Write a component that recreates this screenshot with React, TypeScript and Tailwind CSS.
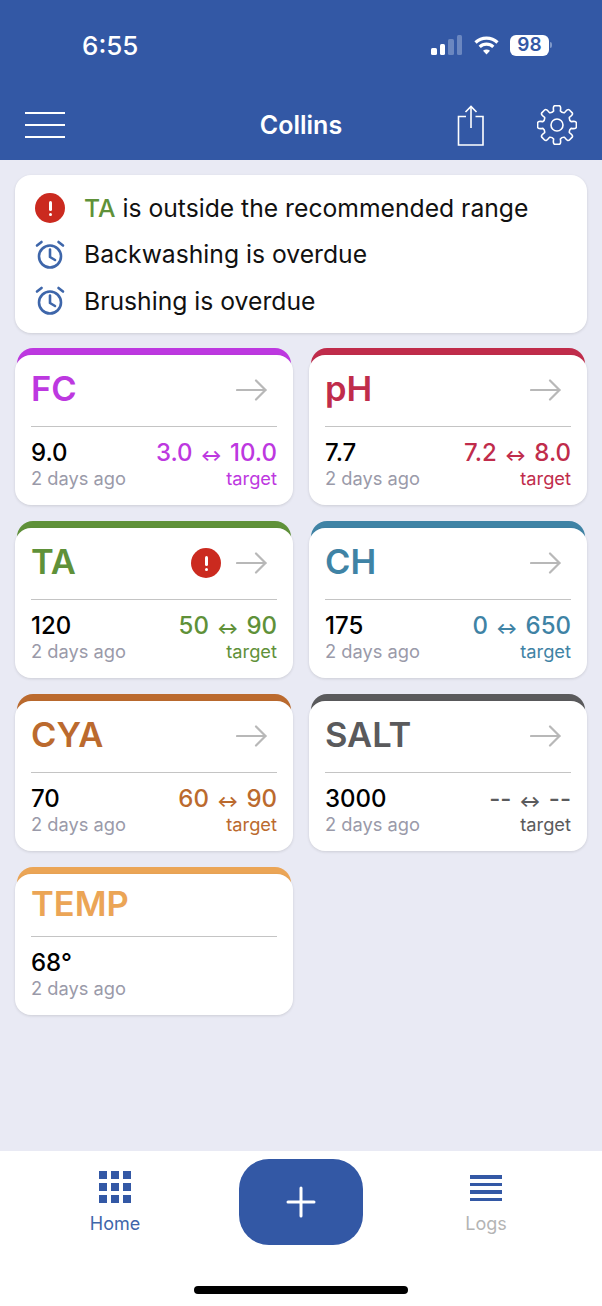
import type { ReactNode } from "react";

type Metric = {
  name: string;
  value: string;
  low?: string;
  high?: string;
  alert?: boolean;
  bar: string;
  text: string;
};

const metrics: Metric[] = [
  { name: "FC", value: "9.0", low: "3.0", high: "10.0", bar: "bg-[#bd38e0]", text: "text-[#bd38e0]" },
  { name: "pH", value: "7.7", low: "7.2", high: "8.0", bar: "bg-[#c02c4b]", text: "text-[#c02c4b]" },
  { name: "TA", value: "120", low: "50", high: "90", alert: true, bar: "bg-[#5f9139]", text: "text-[#5f9139]" },
  { name: "CH", value: "175", low: "0", high: "650", bar: "bg-[#3f83a5]", text: "text-[#3f83a5]" },
  { name: "CYA", value: "70", low: "60", high: "90", bar: "bg-[#bb6a2e]", text: "text-[#bb6a2e]" },
  { name: "SALT", value: "3000", low: "--", high: "--", bar: "bg-[#5a5a5c]", text: "text-[#5a5a5c]" },
  { name: "TEMP", value: "68°", bar: "bg-[#eba556]", text: "text-[#eba556]" },
];

function gearPath() {
  const teeth = 8;
  const cx = 20;
  const cy = 20;
  const outer = 19.5;
  const inner = 14.5;
  const pts: string[] = [];
  for (let i = 0; i < teeth; i++) {
    const a = (i * 2 * Math.PI) / teeth - Math.PI / 2;
    const step = (2 * Math.PI) / teeth;
    const p = (r: number, d: number) =>
      `${(cx + r * Math.cos(a + d * step)).toFixed(2)} ${(cy + r * Math.sin(a + d * step)).toFixed(2)}`;
    pts.push(`${i === 0 ? "M" : "L"}${p(inner, -0.3)}`);
    pts.push(`Q${p(outer, -0.28)} ${p(outer, -0.14)}`);
    pts.push(`L${p(outer, 0.14)}`);
    pts.push(`Q${p(outer, 0.28)} ${p(inner, 0.3)}`);
    pts.push(`Q${p(inner - 1.5, 0.5)} ${p(inner, 0.7)}`);
  }
  return pts.join(" ") + "Z";
}

function GearIcon() {
  return (
    <svg width="40" height="40" viewBox="0 0 40 40" fill="none" stroke="white" strokeWidth="1.6" strokeLinejoin="round">
      <path d={gearPath()} />
      <circle cx="20" cy="20" r="6" />
    </svg>
  );
}

function ShareIcon() {
  return (
    <svg width="28" height="41" viewBox="0 0 28 41" fill="none" stroke="white" strokeWidth="1.6">
      <path d="M9 11.5H1.5V40H26V11.5H18.5" />
      <path d="M14 1.5V23" />
      <path d="M8.5 7L14 1.5L19.5 7" />
    </svg>
  );
}

function AlarmIcon() {
  return (
    <svg width="30" height="30" viewBox="0 0 30 30" fill="none" stroke="#3e66aa" strokeWidth="2.6" strokeLinecap="round" strokeLinejoin="round">
      <circle cx="15" cy="16.5" r="11" />
      <path d="M15 9.5V17L20 20" />
      <path d="M2 5.5L6.5 2" />
      <path d="M28 5.5L23.5 2" />
    </svg>
  );
}

function ErrorDot() {
  return (
    <div className="flex h-[30px] w-[30px] shrink-0 items-center justify-center rounded-full bg-[#cb2a1f]">
      <div className="flex flex-col items-center gap-[2px]">
        <div className="h-[10px] w-[3px] rounded-full bg-white" />
        <div className="h-[3px] w-[3px] rounded-full bg-white" />
      </div>
    </div>
  );
}

function ArrowIcon() {
  return (
    <svg width="31" height="22" viewBox="0 0 31 22" fill="none" stroke="#b8b8b8" strokeWidth="2.2" strokeLinecap="round" strokeLinejoin="round">
      <path d="M1 11H29.5" />
      <path d="M20 1.5L29.5 11L20 20.5" />
    </svg>
  );
}

function StatusIcons() {
  return (
    <div className="flex items-center">
      <div className="flex items-end gap-[3px]">
        <div className="h-[7px] w-[5.5px] rounded-[1.5px] bg-white" />
        <div className="h-[11px] w-[5.5px] rounded-[1.5px] bg-white" />
        <div className="h-[16px] w-[5.5px] rounded-[1.5px] bg-[#6b87c0]" />
        <div className="h-[20px] w-[5.5px] rounded-[1.5px] bg-[#6b87c0]" />
      </div>
      <svg className="ml-[12px]" width="25" height="19" viewBox="0 0 25 19" fill="none" stroke="white" strokeWidth="3.2">
        <path d="M1.5 6.5C7.5 0.7 17.5 0.7 23.5 6.5" />
        <path d="M5.7 10.8C9.5 7.2 15.5 7.2 19.3 10.8" />
        <path d="M12.5 18.5L9 14.8C11 13 14 13 16 14.8Z" fill="white" stroke="none" />
      </svg>
      <div className="ml-[11px] flex h-[21px] w-[39px] items-center justify-center rounded-[6px] bg-white text-[19px] font-semibold text-[#3358a5]">
        98
      </div>
      <div className="ml-[1px] h-[6px] w-[2px] rounded-r-full bg-[#7f98c9]" />
    </div>
  );
}

function Header() {
  return (
    <header className="h-[160px] shrink-0 bg-[#3358a5] text-white">
      <div className="flex h-[90px] items-center justify-between pl-[82px] pr-[50px]">
        <span className="text-[26px] font-medium">6:55</span>
        <StatusIcons />
      </div>
      <div className="grid h-[70px] grid-cols-[1fr_auto_1fr] items-center px-[25px]">
        <div className="flex w-[40px] flex-col gap-[10px]">
          <div className="h-[2px] bg-white" />
          <div className="h-[2px] bg-white" />
          <div className="h-[2px] bg-white" />
        </div>
        <span className="pt-[2px] text-[25px] font-semibold">Collins</span>
        <div className="flex items-center justify-end gap-[52px]">
          <ShareIcon />
          <GearIcon />
        </div>
      </div>
    </header>
  );
}

function AlertRow({ icon, children }: { icon: ReactNode; children: ReactNode }) {
  return (
    <div className="flex h-[46.5px] items-center gap-[19px]">
      {icon}
      <p className="text-[24.7px] text-[#111]">{children}</p>
    </div>
  );
}

function MetricCard({ metric }: { metric: Metric }) {
  const hasTarget = metric.low !== undefined;

  return (
    <div>
      <div className={`mx-[2px] -mb-[20px] h-[27px] rounded-t-[16px] ${metric.bar}`} />
      <div className="relative rounded-[16px] bg-white px-[16px] pb-[17px] shadow-[0_1px_3px_rgba(0,0,0,0.12)]">
        <div className={`flex items-center justify-between ${hasTarget ? "h-[71px]" : "h-[62px]"}`}>
          <span className={`pb-[2px] text-[34.5px] font-semibold ${metric.text}`}>{metric.name}</span>
          <div className="mr-[10px] flex items-center gap-[15px]">
            {metric.alert && <ErrorDot />}
            {hasTarget && <ArrowIcon />}
          </div>
        </div>
        <div className="h-[1px] bg-[#c4c4c4]" />
        <div className="mt-[11px] flex items-start justify-between">
          <div>
            <p className="h-[30px] text-[24px] font-medium leading-[30px] text-black">{metric.value}</p>
            <p className="text-[18.3px] leading-[20px] text-[#9a9aa9]">2 days ago</p>
          </div>
          {hasTarget && (
            <div className={`text-right ${metric.text}`}>
              <p className="h-[30px] text-[24px] font-medium leading-[30px]">
                {metric.low}
                <span className="mx-[8px] text-[16px] font-bold">↔</span>
                {metric.high}
              </p>
              <p className="text-[18.3px] leading-[20px]">target</p>
            </div>
          )}
        </div>
      </div>
    </div>
  );
}

function TabBar() {
  return (
    <footer className="relative h-[155px] shrink-0 bg-white">
      <div className="grid grid-cols-[230px_142px_230px] pt-[8px]">
        <div className="flex flex-col items-center pt-[12px]">
          <div className="grid grid-cols-3 gap-[4px]">
            {Array.from({ length: 9 }).map((_, i) => (
              <div key={i} className="h-[8px] w-[8px] bg-[#3358a5]" />
            ))}
          </div>
          <span className="mt-[7px] text-[18px] text-[#3f66aa]">Home</span>
        </div>
        <div className="flex justify-center">
          <div className="flex h-[86px] w-[124px] items-center justify-center rounded-[30px] bg-[#3358a5]">
            <svg width="30" height="32" viewBox="0 0 30 32" fill="none" stroke="white" strokeWidth="3" strokeLinecap="round">
              <path d="M15 2V30" />
              <path d="M2 16H28" />
            </svg>
          </div>
        </div>
        <div className="flex flex-col items-center pr-[2px] pt-[16px]">
          <div className="flex w-[32px] flex-col gap-[4px]">
            <div className="h-[3.5px] bg-[#3358a5]" />
            <div className="h-[3.5px] bg-[#3358a5]" />
            <div className="h-[3.5px] bg-[#3358a5]" />
            <div className="h-[3.5px] bg-[#3358a5]" />
          </div>
          <span className="mt-[9px] text-[18px] text-[#b4b4b4]">Logs</span>
        </div>
      </div>
      <div className="absolute bottom-[12px] left-[194px] h-[8px] w-[214px] rounded-full bg-black" />
    </footer>
  );
}

export default function App() {
  return (
    <div className="flex h-[1306px] w-[602px] flex-col overflow-hidden bg-[#e9eaf4] font-['Inter',sans-serif]">
      <Header />
      <main className="flex-1 px-[15px] pt-[15px]">
        <div className="rounded-[16px] bg-white px-[20px] pb-[8px] pt-[10px] shadow-[0_1px_3px_rgba(0,0,0,0.12)]">
          <AlertRow icon={<ErrorDot />}>
            <span className="font-medium text-[#5f9139]">TA</span> is outside the recommended range
          </AlertRow>
          <AlertRow icon={<AlarmIcon />}>Backwashing is overdue</AlertRow>
          <AlertRow icon={<AlarmIcon />}>Brushing is overdue</AlertRow>
        </div>
        <div className="mt-[15px] grid grid-cols-2 gap-x-[16px] gap-y-[16px]">
          {metrics.map((metric) => (
            <MetricCard key={metric.name} metric={metric} />
          ))}
        </div>
      </main>
      <TabBar />
    </div>
  );
}
